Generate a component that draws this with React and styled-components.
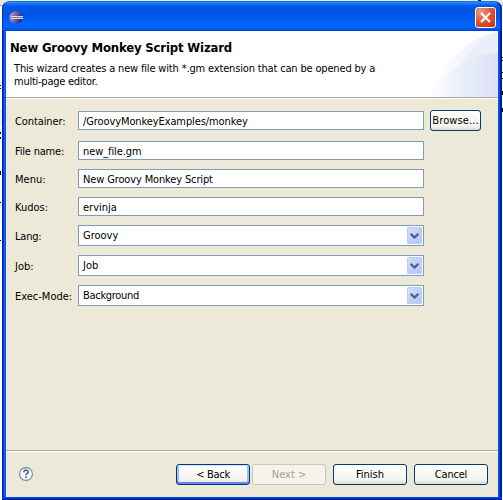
import React from "react";
import styled, { createGlobalStyle, css } from "styled-components";

const GlobalStyle = createGlobalStyle`
  * { box-sizing: border-box; }
  body { margin: 0; overflow: hidden; }
  button, input { font: inherit; }
`;

const Desktop = styled.main`
  position: relative;
  width: 503px;
  height: 500px;
  padding: 1px 0 0 2px;
  overflow: hidden;
  background: linear-gradient(#ece9d8 0 5px, #aca899 5px 6px, #fff 6px);
  font-family: "DejaVu Sans Condensed", "DejaVu Sans", sans-serif;
  font-stretch: condensed;
  font-size: 11px;
  line-height: 13px;
  color: #000;
`;

/* Slivers of the window that lies behind the dialog. */
const Behind = styled.svg`
  position: absolute;
  inset: 0;
`;

const Dialog = styled.section`
  position: relative;
  display: flex;
  flex-direction: column;
  width: 500px;
  height: 499px;
  padding: 0 4px 3px 4px;
  border-radius: 8px 8px 0 0;
  overflow: hidden;
  background:
    linear-gradient(#0045e6 0 1px, #0030c8 1px 2px, #001ea0 2px) bottom / 100% 3px no-repeat,
    linear-gradient(90deg, #0019cf 0 1px, #0831d9 1px 2px, #166aee 2px 3px, #0855dd 3px) left / 4px no-repeat,
    linear-gradient(90deg, #0855dd 0 1px, #0046e8 1px 2px, #001ea0 2px 3px, #00138c 3px) right / 4px no-repeat;
`;

const TitleBar = styled.header`
  display: flex;
  flex: 0 0 30px;
  align-items: center;
  justify-content: space-between;
  margin: 0 -4px;
  padding: 2px 6px 0 7px;
  border-radius: 8px 8px 0 0;
  background: linear-gradient(#0a4fd0 0, #2b90ff 1px, #1273f5 3px, #0059e8 5px, #0054e3 9px, #0055e5 14px, #005df5 19px, #0066ff 23px, #0066ff 26px, #0058e8 28px, #0040c8 30px);
  box-shadow: inset 1px 0 #0030ca, inset -2px 0 #0030ba;
`;

const CloseButton = styled.button`
  display: flex;
  width: 21px;
  height: 21px;
  padding: 0;
  align-items: center;
  justify-content: center;
  border: 1px solid #fff;
  border-radius: 3px;
  background: radial-gradient(circle at 25% 20%, #eb9b80 0, #e3664a 35%, #da4524 65%, #b93414 100%);
`;

const Banner = styled.div`
  position: relative;
  flex: 0 0 68px;
  padding: 9px 0 0 4px;
  background: #fff;
  border-bottom: 1px solid #fff;
  box-shadow: inset 0 -1px #aca899;
`;

const Swoosh = styled.svg`
  position: absolute;
  right: 0;
  top: 0;
`;

const Label = styled.span`
  letter-spacing: ${(p) => p.$track || 0}px;
  white-space: nowrap;
`;

const Heading = styled.h1`
  margin: 0;
  font-size: 13px;
  font-weight: bold;
  line-height: 15px;
  letter-spacing: -0.17px;
  white-space: nowrap;
`;

const Description = styled.p`
  display: flex;
  flex-direction: column;
  margin: 7px 0 0 4px;
`;

const Form = styled.form`
  display: flex;
  flex: 1;
  flex-direction: column;
  padding: 11px 0 0 9px;
  background: #ece9d8;
`;

const Row = styled.div`
  display: grid;
  grid-template-columns: 63px 346px 57px;
  align-items: center;
  height: ${(p) => p.$height}px;
  margin-bottom: ${(p) => p.$gap}px;

  > ${Label} { padding-top: 2px; }
`;

const Field = styled.div`
  display: flex;
  height: ${(p) => (p.$select ? 21 : 19)}px;
  align-items: center;
  justify-content: space-between;
  padding: ${(p) => (p.$select ? "0 1px 0 4px" : "2px 1px 0 4px")};
  border: 1px solid #7f9db9;
  background: #fff;
`;

const Arrow = styled.span`
  display: flex;
  width: 15px;
  height: 17px;
  align-items: center;
  justify-content: center;
  border-radius: 2px;
  background: linear-gradient(135deg, #d6e1fe, #c1d1fc 50%, #afc4f4);
  box-shadow: inset 0 0 0 1px #bacbf8;
`;

const PushButton = styled.button`
  width: ${(p) => p.$width}px;
  height: 21px;
  padding: 1px 0 0;
  border: 1px solid #003c74;
  border-radius: 3px;
  background: linear-gradient(#fff, #f4f3ee 80%, #dbd8cf);
  line-height: 18px;
  color: #000;
  white-space: nowrap;
  ${(p) => p.$primary && css`
    box-shadow: inset 0 1px #cee7ff, inset 0 -2px #6982ee, inset 2px 0 #9ebcf5, inset -2px 0 #9ebcf5;
  `}
  &:disabled {
    border-color: #c9c7ba;
    background: #f5f4ea;
    color: #a1a192;
  }
`;

const BrowseSlot = styled.div`
  display: flex;
  margin-left: 6px;
`;

const Footer = styled.footer`
  display: flex;
  flex: 0 0 47px;
  align-items: flex-start;
  padding: 13px 10px 0 13px;
  border-top: 1px solid #aca899;
  box-shadow: inset 0 1px #fff;
  background: #ece9d8;
`;

const Help = styled.svg`
  margin: 3px auto 0 0;
`;

const Actions = styled.div`
  display: flex;
  gap: ${(p) => p.$gap}px;
`;

const rows = [
  { label: "Container:", value: "/GroovyMonkeyExamples/monkey", gap: 10, height: 21, browse: true, labelTrack: -0.1, valueTrack: -0.1 },
  { label: "File name:", value: "new_file.gm", gap: 9, height: 19, labelTrack: -0.2, valueTrack: -0.1 },
  { label: "Menu:", value: "New Groovy Monkey Script", gap: 9, height: 19, valueTrack: -0.14 },
  { label: "Kudos:", value: "ervinja", gap: 9, height: 19 },
  { label: "Lang:", value: "Groovy", gap: 9, height: 21, select: true, labelTrack: -0.2 },
  { label: "Job:", value: "Job", gap: 9, height: 21, select: true },
  { label: "Exec-Mode:", value: "Background", gap: 0, height: 21, select: true, valueTrack: -0.3 },
];

function EclipseIcon() {
  return (
    <svg width="15" height="13" viewBox="0 0 15 13">
      <defs>
        <linearGradient id="orb" x2="1" y2=".3">
          <stop offset="0" stopColor="#e3a3a8" />
          <stop offset=".35" stopColor="#8d7bb0" />
          <stop offset="1" stopColor="#2c2478" />
        </linearGradient>
      </defs>
      <ellipse cx="7.2" cy="6.5" rx="6.8" ry="6.2" fill="url(#orb)" />
      <path d="M2 5.5h12M2 7.5h12" stroke="#d3dcf8" />
      <path d="M2 6.5h12" stroke="#7773b3" />
    </svg>
  );
}

function FormRow({ row }) {
  return (
    <Row $height={row.height} $gap={row.gap}>
      <Label $track={row.labelTrack}>{row.label}</Label>
      <Field $select={row.select}>
        <Label $track={row.valueTrack}>{row.value}</Label>
        {row.select && (
          <Arrow>
            <svg width="9" height="6" viewBox="0 0 9 6">
              <path d="M.7.8 4.5 4.5 8.3.8" fill="none" stroke="#4d6185" strokeWidth="2.3" />
            </svg>
          </Arrow>
        )}
      </Field>
      {row.browse && (
        <BrowseSlot>
          <PushButton type="button" $width={57}><Label $track={0.1}>Browse...</Label></PushButton>
        </BrowseSlot>
      )}
    </Row>
  );
}

export default function App() {
  return (
    <Desktop>
      <GlobalStyle />
      <Behind width="503" height="500">
        <path d="M0 85h1v1h-1zM0 88h1v1h-1zM0 132h1v2h-1zM0 137h1v2h-1zM0 171h1v4h-1zM0 202h1v1h-1zM0 240h1v1h-1zM478 0h3v1h-3z" />
        <path d="M502 57h1v1h-1zM502 60h1v1h-1zM502 72h1v1h-1zM502 78h1v1h-1zM502 91h1v4h-1zM502 108h1v4h-1z" />
        <path d="M0 110h2v16h-2z" fill="#f0f1fa" />
      </Behind>
      <Dialog>
        <TitleBar>
          <EclipseIcon />
          <CloseButton aria-label="Close">
            <svg width="13" height="13" viewBox="0 0 13 13">
              <path d="m2 2 9 9M11 2l-9 9" stroke="#fff" strokeWidth="2.2" />
            </svg>
          </CloseButton>
        </TitleBar>
        <Banner>
          <Swoosh width="74" height="66" viewBox="0 0 74 66">
            <defs>
              <linearGradient id="outer" x2="1">
                <stop offset="0" stopColor="#fff" />
                <stop offset="1" stopColor="#e9eef9" />
              </linearGradient>
              <linearGradient id="inner" x2="1">
                <stop offset="0" stopColor="#fff" />
                <stop offset=".5" stopColor="#eaeef9" />
                <stop offset="1" stopColor="#dbe2f5" />
              </linearGradient>
            </defs>
            <path d="M4 66C17 34 41 8 74 1v65z" fill="url(#outer)" />
            <path d="M33 38C44 25 54 7 74 1v23C58 25 45 31 33 38z" fill="#e9eef9" />
            <path d="M4 66C19 43 44 23 74 22v44z" fill="url(#inner)" />
          </Swoosh>
          <Heading>New Groovy Monkey Script Wizard</Heading>
          <Description>
            <Label $track={-0.165}>This wizard creates a new file with *.gm extension that can be opened by a</Label>
            <Label $track={-0.25}>multi-page editor.</Label>
          </Description>
        </Banner>
        <Form>
          {rows.map((row) => <FormRow key={row.label} row={row} />)}
        </Form>
        <Footer>
          <Help width="14" height="14" viewBox="0 0 14 14">
            <circle cx="7" cy="7" r="6.4" fill="#f8f9fc" stroke="#7186a5" strokeWidth="1.1" />
            <path d="M4.8 5.3c0-3 4.6-2.6 4.4-.2C9.1 6.5 7 6.5 7 8.3M7 9.3v1.8" fill="none" stroke="#465f87" strokeWidth="1.6" />
          </Help>
          <Actions $gap={7}>
            <Actions $gap={2}>
              <PushButton $width={74} $primary><Label $track={-0.3}>&lt; Back</Label></PushButton>
              <PushButton $width={74} disabled><Label>Next &gt;</Label></PushButton>
            </Actions>
            <PushButton $width={74}><Label>Finish</Label></PushButton>
            <PushButton $width={74}><Label $track={-0.2}>Cancel</Label></PushButton>
          </Actions>
        </Footer>
      </Dialog>
    </Desktop>
  );
}
